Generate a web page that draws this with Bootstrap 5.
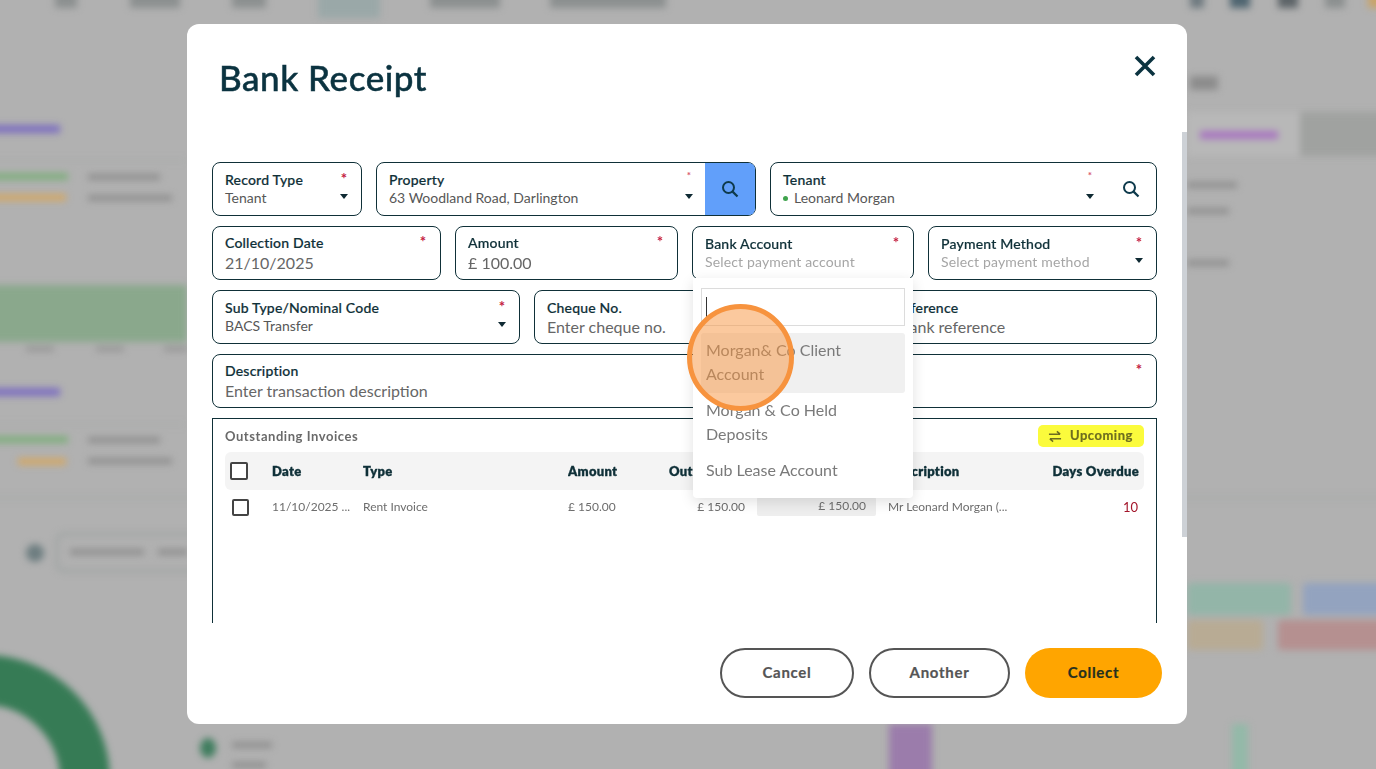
<!DOCTYPE html>
<html lang="en">
<head>
  <meta charset="UTF-8">
  <title>Bank Receipt</title>
  <meta name="viewport" content="width=device-width, initial-scale=1">
  <link href="https://cdn.jsdelivr.net/npm/bootstrap@5.3.2/dist/css/bootstrap.min.css" rel="stylesheet">
  <style>
    body { background: #b1b1b1; overflow: hidden; font-family: "Lato", "Liberation Sans", sans-serif; color: #0f3038; }

    /* blurred page behind the dialog, oversized so the blur doesn't fade at the window edge */
    .bg-page { position: fixed; inset: -20px; overflow: hidden; filter: blur(3.5px); }
    .bg-inner { position: absolute; left: 20px; top: 20px; width: 1376px; height: 769px; }
    .bg-inner i { position: absolute; display: block; }
    .b-nav { height: 28px; top: -20px; background: #8c9090; }
    .b-line { height: 1px; background: #a4a8a6; }
    .b-purple { background: #7d6fc0; height: 8px; }
    .b-green { background: #7fae7d; height: 7px; }
    .b-orange { background: #d2a868; height: 7px; }
    .b-grey { background: #8f8f8f; height: 6px; }

    .receipt-dialog { max-width: 1000px; width: 1000px; margin: 24px 0 0 187px; }
    .receipt-box { height: 700px; border: 0; border-radius: 12px; background: #fff; overflow: hidden; }
    .receipt-head { height: 108px; padding: 0 31px 0 32px; border: 0; align-items: flex-start; }
    .receipt-head h2 { font-size: 35px; font-weight: 500; line-height: 1; margin: 36px 0 0; color: #0b3340; letter-spacing: .55px; -webkit-text-stroke: .5px #0b3340; }
    .close-x { background: none; border: 0; padding: 0; margin-top: 31px; line-height: 0; }
    .receipt-body { padding: 30px 30px 0 25px; height: 491px; flex: none; overflow: hidden; }
    .bar-thumb { position: absolute; right: 0; top: 0; width: 5px; height: 405px; background: #cdd1d6; }

    .fld-row { display: grid; gap: 14px; margin-bottom: 10px; }
    .r-one { grid-template-columns: 150px 380px 387px; }
    .r-two { grid-template-columns: 229px 223px 222px 229px; }
    .r-three { grid-template-columns: 308px 298px 311px; }
    .fld { height: 54px; border: 1px solid #0f3038; border-radius: 8px; padding: 8px 10px 0 12px; display: flex; background: #fff; position: relative; min-width: 0; }
    .fld-up { padding-top: 7px; }
    .fld-up .fld-big { margin-top: 1px; }
    .fld-text { flex: 1 1 auto; min-width: 0; }
    .fld-label { font-size: 14px; line-height: 18px; font-weight: 500; color: #0f3038; letter-spacing: .2px; white-space: nowrap; -webkit-text-stroke: .2px #0f3038; }
    .fld-val { font-size: 14px; line-height: 18px; color: #575757; white-space: nowrap; }
    .fld-big { font-size: 16px; line-height: 20px; color: #666; }
    .fld-hint { color: #a6a6a6; letter-spacing: .15px; }
    .fld-side { display: flex; flex-direction: column; align-items: center; width: 14px; flex: none; }
    .star { color: #c4203f; font-size: 15px; line-height: 14px; font-weight: 700; height: 16px; }
    .star-sm { font-size: 10px; color: #d8546c; line-height: 8px; }
    .caret-dn { width: 0; height: 0; border-left: 4.5px solid transparent; border-right: 4.5px solid transparent; border-top: 5.5px solid #0f2a33; margin-top: 7px; }
    .fld-search { width: 50px; margin: -8px -10px 0 9px; background: #619ffa; display: flex; align-items: center; justify-content: center; flex: none; }
    .fld-search-plain { background: none; width: 40px; margin-left: 14px; margin-right: -5px; }
    .dot-green { display: inline-block; width: 5px; height: 5px; background: #3fa34d; border-radius: 50%; margin: 0 6px 2px 0; }

    .bank-menu { display: block; top: 51px; left: 0; width: 220px; height: 220px; padding: 10px 8px; border: 0; border-radius: 0 0 4px 4px; box-shadow: 0 4px 14px rgba(0,0,0,.12); z-index: 20; }
    .bank-search { height: 38px; border: 1px solid #dcdcdc; margin-bottom: 7px; padding: 8px 4px; }
    .bank-search b { display: block; width: 1px; height: 20px; background: #333; }
    .bank-menu .dropdown-item { white-space: normal; font-size: 16px; line-height: 24px; color: #7a7a7a; padding: 5px 5px 7px 5px; border-radius: 3px; }
    .bank-menu .dropdown-item.active { background: #f0f0f0; color: #7a7a7a; }

    .inv-box { border: 1px solid #0f3038; height: 300px; padding: 6px 12px 0 12px; }
    .inv-title { font-size: 13px; font-weight: 700; color: #6a6a6a; letter-spacing: .55px; padding-top: 2px; }
    .upcoming { background: #fbfb3c; color: #6d6d20; border-radius: 5px; font-size: 13px; font-weight: 700; padding: 0 10px; width: 106px; height: 22px; letter-spacing: .5px; -webkit-text-stroke: .2px #6d6d20; }
    .inv-table { table-layout: fixed; width: 919px; margin: 5px 0 0; --bs-table-bg: transparent; --bs-table-border-color: transparent; }
    .inv-table th { background: #f4f4f4; height: 38px; font-size: 13px; font-weight: 800; color: #0f3038; letter-spacing: .3px; vertical-align: middle; padding: 1px 0 0; white-space: nowrap; overflow: hidden; -webkit-text-stroke: .3px #0f3038; }
    .inv-table th:first-child { border-radius: 6px 0 0 6px; padding-left: 5px; }
    .inv-table th:last-child { border-radius: 0 6px 6px 0; padding-right: 5px; }
    .inv-table td { font-size: 12px; color: #6d6d6d; padding: 6px 0 0; vertical-align: top; line-height: 20px; white-space: nowrap; }
    .chk { display: block; width: 18px; height: 18px; border: 2px solid #444; border-radius: 2px; background: #fff; }
    .chk-row { width: 17px; height: 17px; margin: 2px 0 0 7px; }
    .inv-input { background: #eee; border-radius: 2px; height: 19px; line-height: 17px; text-align: right; padding-right: 10px; margin-right: 12px; }
    .inv-table td.overdue { color: #a3152a; font-size: 13px; padding-right: 6px; }
    .inv-table td.inv-out { padding-right: 12px; }

    .receipt-foot { border: 0; padding: 25px 25px 0 0; height: 101px; flex: none; align-items: flex-start; gap: 15px; justify-content: flex-end; }
    .receipt-foot .btn { margin: 0; height: 50px; border-radius: 25px; font-size: 15px; font-weight: 700; letter-spacing: .7px; padding-top: 4px; padding-bottom: 6px; }
    .btn-line { border: 2px solid #555; color: #555; background: #fff; -webkit-text-stroke: .2px #555; }
    .btn-collect { background: #ffa500; color: #26301f; border: 0; width: 137px; -webkit-text-stroke: .2px #26301f; }

    .click-ring { position: fixed; left: 687px; top: 304px; width: 107px; height: 107px; border-radius: 50%; border: 5px solid #f7933e; background: rgba(247,147,62,.5); z-index: 2000; }
  </style>
</head>
<body>

  <!-- page behind, blurred -->
  <div class="bg-page">
    <div class="bg-inner">
      <i class="b-nav" style="left:55px;width:22px"></i>
      <i class="b-nav" style="left:130px;width:50px"></i>
      <i class="b-nav" style="left:232px;width:34px"></i>
      <i class="b-nav" style="left:318px;width:62px;height:38px;background:#9aa8a8"></i>
      <i class="b-nav" style="left:430px;width:70px"></i>
      <i class="b-nav" style="left:550px;width:116px"></i>
      <i class="b-nav" style="left:1190px;width:14px;background:#6f7a80"></i>
      <i class="b-nav" style="left:1230px;width:20px;background:#4f6570"></i>
      <i class="b-nav" style="left:1278px;width:20px;background:#5d6468"></i>
      <i class="b-nav" style="left:1325px;width:20px"></i>
      <i class="b-nav" style="left:1368px;width:30px;background:#c9a46a"></i>

      <i class="b-purple" style="left:-20px;top:125px;width:80px"></i>
      <i class="b-line" style="left:-20px;top:160px;width:207px"></i>
      <i class="b-green" style="left:-20px;top:173px;width:88px"></i>
      <i class="b-orange" style="left:-20px;top:194px;width:86px"></i>
      <i class="b-grey" style="left:88px;top:174px;width:72px"></i>
      <i class="b-grey" style="left:88px;top:195px;width:84px"></i>
      <i style="left:-20px;top:285px;width:207px;height:57px;background:#8aa88c"></i>
      <i class="b-grey" style="left:26px;top:347px;width:28px;height:4px"></i>
      <i class="b-grey" style="left:96px;top:347px;width:28px;height:4px"></i>
      <i class="b-grey" style="left:164px;top:347px;width:24px;height:4px"></i>
      <i class="b-purple" style="left:-20px;top:388px;width:80px"></i>
      <i class="b-line" style="left:-20px;top:424px;width:207px"></i>
      <i class="b-green" style="left:-20px;top:436px;width:88px"></i>
      <i class="b-orange" style="left:18px;top:458px;width:48px"></i>
      <i class="b-grey" style="left:88px;top:437px;width:72px"></i>
      <i class="b-grey" style="left:88px;top:458px;width:84px"></i>
      <i class="b-line" style="left:-20px;top:497px;width:1416px;height:2px"></i>
      <i style="left:26px;top:544px;width:18px;height:18px;border-radius:50%;background:#6d7d80"></i>
      <i style="left:56px;top:533px;width:150px;height:39px;border:2px solid #959d9b;border-radius:8px"></i>
      <i class="b-grey" style="left:70px;top:549px;width:74px"></i>
      <i class="b-grey" style="left:158px;top:549px;width:30px"></i>
      <i style="left:-140px;top:655px;width:250px;height:250px;border-radius:50%;border:50px solid #367b55"></i>
      <i style="left:200px;top:738px;width:16px;height:20px;border-radius:50%;background:#3f7d5e"></i>
      <i class="b-grey" style="left:232px;top:742px;width:40px"></i>
      <i class="b-grey" style="left:232px;top:762px;width:34px"></i>
      <i style="left:889px;top:724px;width:43px;height:65px;background:#9b7cab"></i>
      <i style="left:1232px;top:724px;width:16px;height:65px;background:#93b9a8"></i>

      <i style="left:1190px;top:76px;width:28px;height:14px;background:#8c8c8c"></i>
      <i style="left:1187px;top:112px;width:113px;height:44px;background:#b8b8b8"></i>
      <i class="b-purple" style="left:1200px;top:131px;width:78px;background:#a874c0"></i>
      <i style="left:1300px;top:112px;width:96px;height:44px;background:#a0a2a0"></i>
      <i class="b-grey" style="left:1187px;top:182px;width:50px"></i>
      <i class="b-grey" style="left:1187px;top:208px;width:42px"></i>
      <i class="b-grey" style="left:1187px;top:260px;width:42px"></i>
      <i style="left:1187px;top:583px;width:104px;height:32px;background:#93b5a8;border-radius:4px"></i>
      <i style="left:1303px;top:583px;width:93px;height:32px;background:#93a3bf;border-radius:4px"></i>
      <i style="left:1187px;top:620px;width:76px;height:30px;background:#b8ab94;border-radius:4px"></i>
      <i style="left:1278px;top:620px;width:118px;height:30px;background:#b59090;border-radius:4px"></i>
    </div>
  </div>

  <div class="modal d-block">
    <div class="modal-dialog receipt-dialog">
      <div class="modal-content receipt-box">

        <div class="modal-header receipt-head justify-content-between">
          <h2>Bank Receipt</h2>
          <button class="close-x" type="button" aria-label="Close">
            <svg width="22" height="22" viewBox="0 0 22 22"><path d="M2 2 20 20M20 2 2 20" stroke="#0b3340" stroke-width="3.6" fill="none"/></svg>
          </button>
        </div>

        <div class="modal-body receipt-body">
          <div class="bar-thumb"></div>

          <div class="fld-row r-one">
            <div class="fld">
              <div class="fld-text"><div class="fld-label">Record Type</div><div class="fld-val">Tenant</div></div>
              <div class="fld-side"><span class="star">*</span><span class="caret-dn"></span></div>
            </div>
            <div class="fld">
              <div class="fld-text"><div class="fld-label">Property</div><div class="fld-val">63 Woodland Road, Darlington</div></div>
              <div class="fld-side"><span class="star star-sm">*</span><span class="caret-dn"></span></div>
              <div class="fld-search rounded-end">
                <svg width="18" height="18" viewBox="0 0 18 18"><circle cx="7.5" cy="7.5" r="5.5" stroke="#0e3a4c" stroke-width="2" fill="none"/><path d="M11.6 11.6 16.5 16.5" stroke="#0e3a4c" stroke-width="2.2"/></svg>
              </div>
            </div>
            <div class="fld">
              <div class="fld-text"><div class="fld-label">Tenant</div><div class="fld-val"><span class="dot-green"></span>Leonard Morgan</div></div>
              <div class="fld-side"><span class="star star-sm">*</span><span class="caret-dn"></span></div>
              <div class="fld-search fld-search-plain">
                <svg width="18" height="18" viewBox="0 0 18 18"><circle cx="7.5" cy="7.5" r="5.5" stroke="#0e3a4c" stroke-width="2" fill="none"/><path d="M11.6 11.6 16.5 16.5" stroke="#0e3a4c" stroke-width="2.2"/></svg>
              </div>
            </div>
          </div>

          <div class="fld-row r-two">
            <div class="fld fld-up">
              <div class="fld-text"><div class="fld-label">Collection Date</div><div class="fld-val fld-big">21/10/2025</div></div>
              <div class="fld-side"><span class="star">*</span></div>
            </div>
            <div class="fld fld-up">
              <div class="fld-text"><div class="fld-label">Amount</div><div class="fld-val fld-big">£ 100.00</div></div>
              <div class="fld-side"><span class="star">*</span></div>
            </div>
            <div class="fld">
              <div class="fld-text"><div class="fld-label">Bank Account</div><div class="fld-val fld-hint">Select payment account</div></div>
              <div class="fld-side"><span class="star">*</span></div>
              <div class="dropdown-menu bank-menu">
                <div class="bank-search"><b></b></div>
                <a class="dropdown-item active" href="#">Morgan&amp; Co Client Account</a>
                <a class="dropdown-item" href="#">Morgan &amp; Co Held Deposits</a>
                <a class="dropdown-item" href="#">Sub Lease Account</a>
              </div>
            </div>
            <div class="fld">
              <div class="fld-text"><div class="fld-label">Payment Method</div><div class="fld-val fld-hint">Select payment method</div></div>
              <div class="fld-side"><span class="star">*</span><span class="caret-dn"></span></div>
            </div>
          </div>

          <div class="fld-row r-three">
            <div class="fld">
              <div class="fld-text"><div class="fld-label">Sub Type/Nominal Code</div><div class="fld-val">BACS Transfer</div></div>
              <div class="fld-side"><span class="star">*</span><span class="caret-dn"></span></div>
            </div>
            <div class="fld">
              <div class="fld-text"><div class="fld-label">Cheque No.</div><div class="fld-val fld-big">Enter cheque no.</div></div>
            </div>
            <div class="fld">
              <div class="fld-text"><div class="fld-label">Bank Reference</div><div class="fld-val fld-big">Enter bank reference</div></div>
            </div>
          </div>

          <div class="fld-row">
            <div class="fld fld-up">
              <div class="fld-text"><div class="fld-label">Description</div><div class="fld-val fld-big">Enter transaction description</div></div>
              <div class="fld-side"><span class="star">*</span></div>
            </div>
          </div>

          <div class="inv-box">
            <div class="d-flex justify-content-between align-items-center">
              <span class="inv-title">Outstanding Invoices</span>
              <span class="upcoming d-flex align-items-center gap-2">
                <svg width="14" height="13" viewBox="0 0 15 13"><path d="M1 4H13M9.5 1 13 4M14 9H2M5.5 12 2 9" stroke="#6d6d20" stroke-width="1.6" fill="none"/></svg>
                Upcoming
              </span>
            </div>
            <table class="table inv-table">
              <colgroup>
                <col style="width:47px"><col style="width:91px"><col style="width:205px"><col style="width:101px"><col style="width:88px"><col style="width:131px"><col style="width:120px"><col style="width:136px">
              </colgroup>
              <thead>
                <tr>
                  <th><span class="chk"></span></th>
                  <th>Date</th><th>Type</th><th>Amount</th><th>Out</th><th></th><th>Description</th>
                  <th class="text-end">Days Overdue</th>
                </tr>
              </thead>
              <tbody>
                <tr>
                  <td><span class="chk chk-row"></span></td>
                  <td>11/10/2025 ...</td>
                  <td>Rent Invoice</td>
                  <td>£ 150.00</td>
                  <td class="text-end inv-out">£ 150.00</td>
                  <td><div class="inv-input">£ 150.00</div></td>
                  <td>Mr Leonard Morgan (...</td>
                  <td class="text-end overdue">10</td>
                </tr>
              </tbody>
            </table>
          </div>
        </div>

        <div class="modal-footer receipt-foot">
          <button class="btn btn-line px-0" style="width:134px" type="button">Cancel</button>
          <button class="btn btn-line px-0" style="width:141px" type="button">Another</button>
          <button class="btn btn-collect" type="button">Collect</button>
        </div>

      </div>
    </div>
  </div>

  <div class="click-ring"></div>

  <script src="https://cdn.jsdelivr.net/npm/bootstrap@5.3.2/dist/js/bootstrap.bundle.min.js"></script>
</body>
</html>
